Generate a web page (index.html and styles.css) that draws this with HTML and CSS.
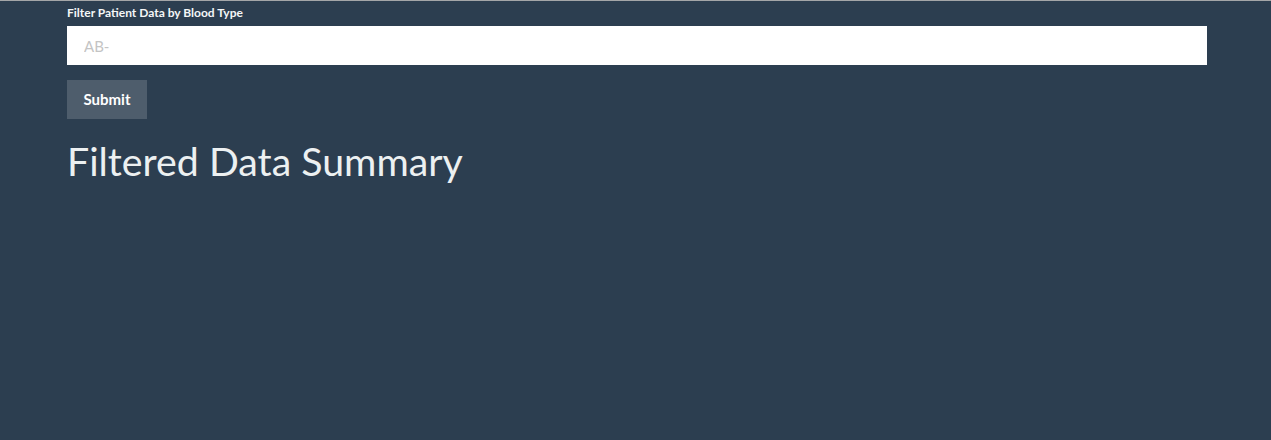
FILE: index.html
```html
<!DOCTYPE html>
<html>
<head>
<meta charset="utf-8">
<link rel="stylesheet" href="styles.css">
</head>
<body>
<div class="page">
  <form class="filter">
    <label class="label" for="bt">Filter Patient Data by Blood Type</label>
    <input class="field" id="bt" type="text" placeholder="AB-">
    <button class="btn" type="button">Submit</button>
  </form>
  <h1 class="title">Filtered Data Summary</h1>
</div>
</body>
</html>
```
FILE: styles.css
```css
html, body {
  margin: 0;
  padding: 0;
  height: 100%;
}
body {
  background: #2c3e50;
  border-top: 1px solid #a4a6a8;
  box-sizing: border-box;
  font-family: Lato, "Liberation Sans", sans-serif;
  color: #ffffff;
}
.page {
  width: 1140px;
  padding-left: 67px;
}
.filter {
  display: flex;
  flex-direction: column;
  align-items: flex-start;
}
.label {
  font-size: 12px;
  font-weight: 700;
  line-height: 14px;
  margin-top: 5px;
  margin-bottom: 6px;
  color: #f4f6f7;
}
.field {
  box-sizing: border-box;
  width: 1140px;
  height: 39px;
  border: none;
  background: #ffffff;
  padding: 0 17px;
  font-family: Lato, "Liberation Sans", sans-serif;
  font-size: 15px;
  color: #333;
  outline: none;
  margin: 0;
}
.field::placeholder {
  color: #c4c4c4;
}
.btn {
  margin-top: 15px;
  width: 80px;
  height: 39px;
  border: none;
  background: #4e5d6c;
  color: #ffffff;
  font-family: Lato, "Liberation Sans", sans-serif;
  font-weight: 700;
  font-size: 15px;
  padding: 0 0 2px 0;
}
.title {
  margin: 18px 0 0 0;
  font-size: 39.3px;
  font-weight: 400;
  line-height: 48px;
  color: #ecf0f1;
}
```
